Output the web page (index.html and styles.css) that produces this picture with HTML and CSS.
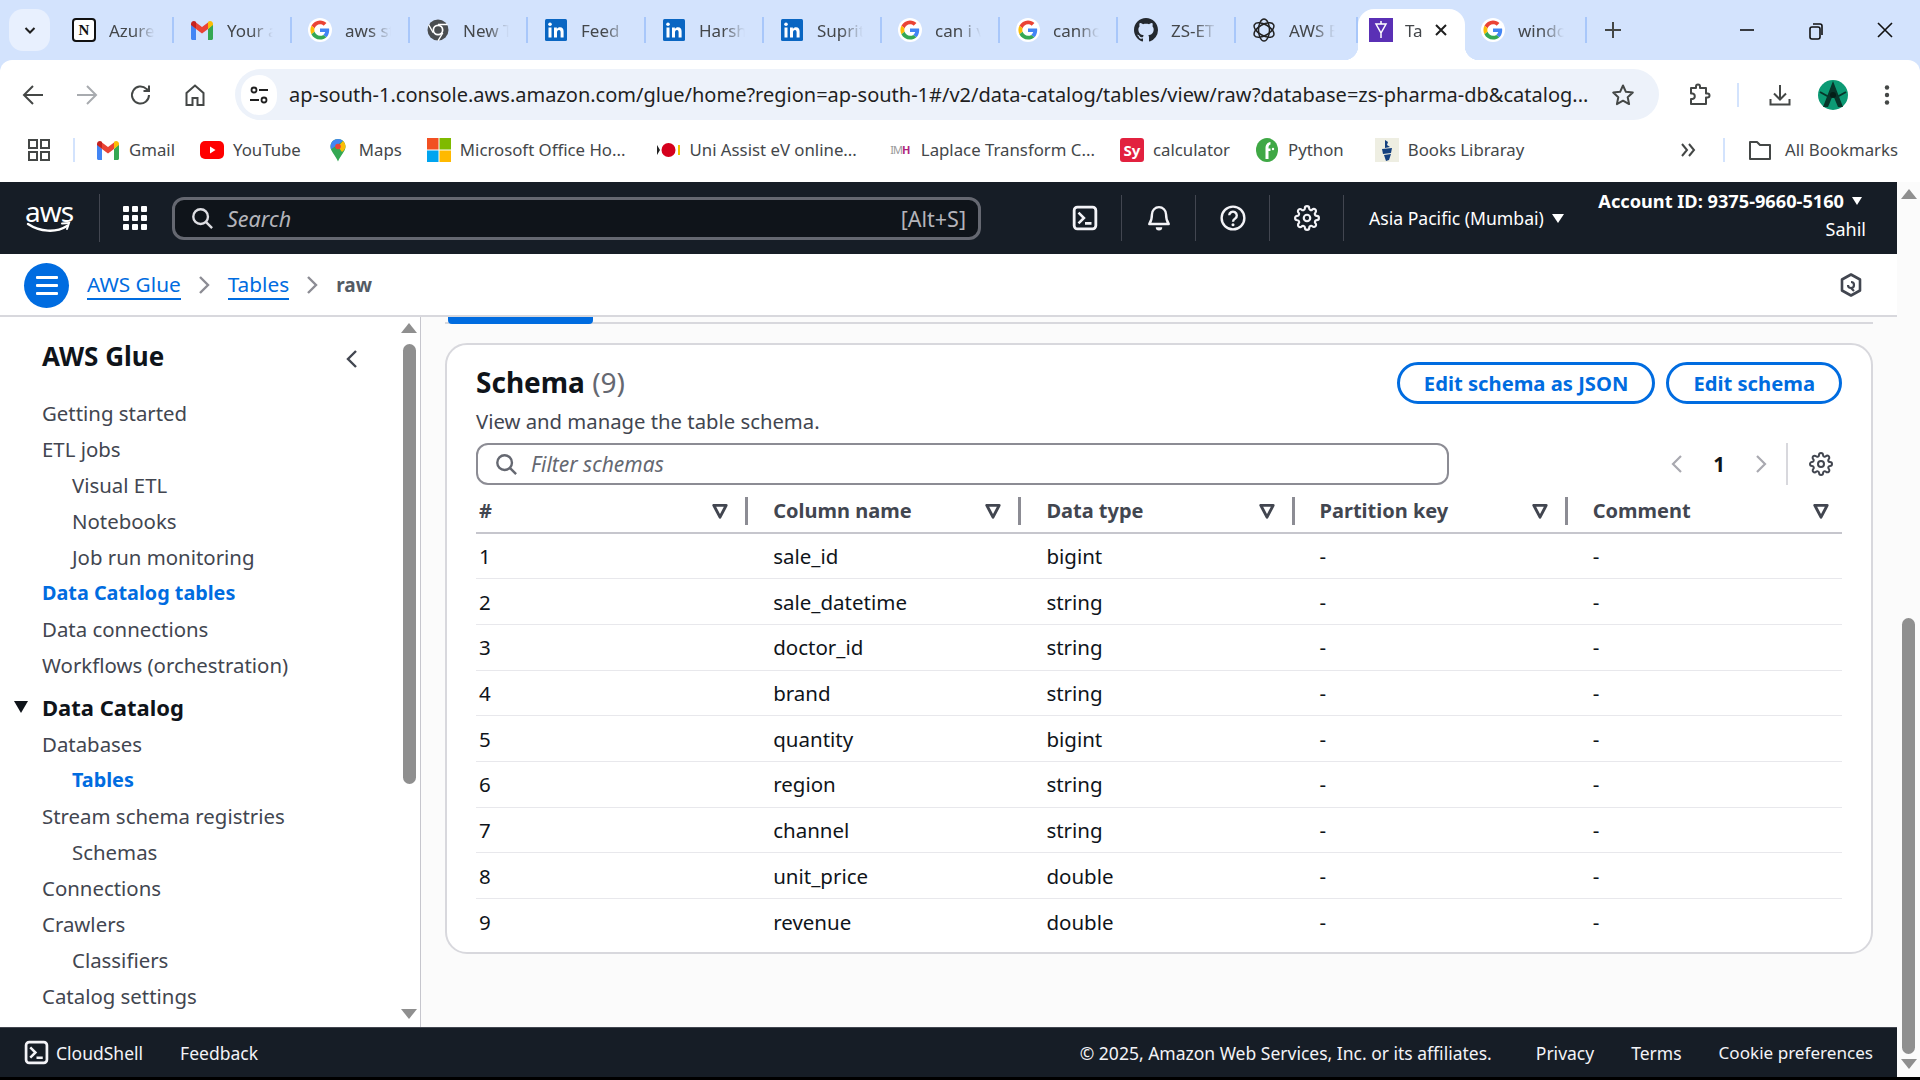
FILE: index.html
```html
<!DOCTYPE html>
<html lang="en">
<head>
    <meta charset="UTF-8">
    <title>Tables | AWS Glue</title>
    <link rel="stylesheet" href="styles.css">
</head>
<body>
<svg class="defs" width="0" height="0">
    <symbol id="g" viewBox="-6 -6 60 60">
        <circle cx="24" cy="24" r="30" fill="#fff"/>
        <path fill="#EA4335" d="M24 9.5c3.54 0 6.71 1.22 9.21 3.6l6.85-6.85C35.9 2.38 30.47 0 24 0 14.62 0 6.51 5.38 2.56 13.22l7.98 6.19C12.43 13.72 17.74 9.5 24 9.5z"/>
        <path fill="#4285F4" d="M46.98 24.55c0-1.57-.15-3.09-.38-4.55H24v9.02h12.94c-.58 2.96-2.26 5.48-4.78 7.18l7.73 6c4.51-4.18 7.09-10.36 7.09-17.65z"/>
        <path fill="#FBBC05" d="M10.53 28.59c-.48-1.45-.76-2.99-.76-4.59s.27-3.14.76-4.59l-7.98-6.19C.92 16.46 0 20.12 0 24c0 3.88.92 7.54 2.56 10.78l7.97-6.19z"/>
        <path fill="#34A853" d="M24 48c6.48 0 11.93-2.13 15.89-5.81l-7.73-6c-2.15 1.45-4.92 2.3-8.16 2.3-6.26 0-11.57-4.22-13.47-9.91l-7.98 6.19C6.51 42.62 14.62 48 24 48z"/>
    </symbol>
    <symbol id="gmail" viewBox="0 0 24 24">
        <path fill="#4285F4" d="M1 6v14.5c0 .8.7 1.5 1.5 1.5H6V11z"/>
        <path fill="#34A853" d="M18 11v11h3.5c.8 0 1.5-.7 1.5-1.5V6z"/>
        <path fill="#EA4335" d="M6 11V4.5l6 4.6 6-4.6V11l-6 4.6z"/>
        <path fill="#C5221F" d="M1 6c0-2.5 2.8-3.8 4.8-2.3L6 3.9V11L1 7z"/>
        <path fill="#FBBC05" d="M18 3.9l.2-.2C20.200 2.200 23 3.500 23 6v1l-5 4z"/>
    </symbol>
    <symbol id="linkedin" viewBox="0 0 24 24">
        <rect x="1" y="1" width="22" height="22" rx="1.500" fill="#0a66c2"/>
        <rect x="4.500" y="9.500" width="3" height="10" fill="#fff"/>
        <circle cx="6" cy="6.300" r="1.800" fill="#fff"/>
        <path fill="#fff" d="M10 9.500h2.900v1.400c.6-1 1.700-1.700 3.100-1.700 2.700 0 3.600 1.700 3.600 4.400v5.900h-3v-5.200c0-1.300-.3-2.400-1.600-2.400-1.400 0-2 1-2 2.400v5.200h-3z"/>
    </symbol>
    <symbol id="gear" viewBox="0 0 24 24">
        <g fill="none" stroke="currentColor" stroke-width="2">
            <circle cx="12" cy="12" r="3"/>
            <path d="M19.400 15a1.650 1.650 0 0 0 .33 1.820l.06.06a2 2 0 0 1 0 2.830 2 2 0 0 1-2.830 0l-.06-.06a1.650 1.650 0 0 0-1.820-.33 1.650 1.650 0 0 0-1 1.510V21a2 2 0 0 1-2 2 2 2 0 0 1-2-2v-.09A1.650 1.650 0 0 0 9 19.400a1.650 1.650 0 0 0-1.820.33l-.06.06a2 2 0 0 1-2.830 0 2 2 0 0 1 0-2.830l.06-.06a1.650 1.650 0 0 0 .33-1.820 1.650 1.650 0 0 0-1.510-1H3a2 2 0 0 1-2-2 2 2 0 0 1 2-2h.09A1.650 1.650 0 0 0 4.600 9a1.650 1.650 0 0 0-.33-1.820l-.06-.06a2 2 0 0 1 0-2.830 2 2 0 0 1 2.830 0l.06.06a1.650 1.650 0 0 0 1.820.33H9a1.650 1.650 0 0 0 1-1.510V3a2 2 0 0 1 2-2 2 2 0 0 1 2 2v.09a1.650 1.650 0 0 0 1 1.510 1.650 1.650 0 0 0 1.820-.33l.06-.06a2 2 0 0 1 2.830 0 2 2 0 0 1 0 2.830l-.06.06a1.650 1.650 0 0 0-.33 1.820V9a1.650 1.650 0 0 0 1.510 1H21a2 2 0 0 1 2 2 2 2 0 0 1-2 2h-.09a1.650 1.650 0 0 0-1.510 1z"/>
        </g>
    </symbol>
    <symbol id="search" viewBox="0 0 24 24">
        <g fill="none" stroke="currentColor" stroke-width="2.600">
            <circle cx="10.500" cy="10.500" r="8"/>
            <path d="M16.500 16.500L23 23"/>
        </g>
    </symbol>
    <symbol id="shell" viewBox="0 0 24 24">
        <rect x="2" y="2" width="20" height="20" rx="3" fill="none" stroke="currentColor" stroke-width="2.600"/>
        <path d="M6 7l5 5-5 5M12 17h6" fill="none" stroke="currentColor" stroke-width="2.400"/>
    </symbol>
    <symbol id="caret-filter" viewBox="0 0 16 16">
        <path d="M2.500 3h11L8 13.500z" fill="none" stroke="currentColor" stroke-width="2.600" stroke-linejoin="round"/>
    </symbol>
</svg>

<header class="browser">
    <div class="tabstrip">
        <div class="tabsearch">
            <svg width="16" height="16" viewBox="0 0 16 16"><path d="M3.500 6L8 10.500 12.500 6" fill="none" stroke="#1f1f1f" stroke-width="2"/></svg>
        </div>
        <div class="tab">
            <span class="fav notion">N</span><span class="tabtitle">Azure</span>
        </div>
        <div class="tab">
            <svg class="fav"><use href="#gmail"/></svg><span class="tabtitle">Your a</span>
        </div>
        <div class="tab">
            <svg class="fav"><use href="#g"/></svg><span class="tabtitle">aws st</span>
        </div>
        <div class="tab">
            <svg class="fav" viewBox="0 0 24 24"><circle cx="12" cy="12" r="10.500" fill="#4a4d50"/><circle cx="12" cy="12" r="5.500" fill="#fff"/><circle cx="12" cy="12" r="3.800" fill="#4a4d50"/><path d="M12 6.500h9.500M7.200 14.800L2.600 6.600M16.800 14.800l-4.800 8" stroke="#fff" stroke-width="1.300"/></svg><span class="tabtitle">New T</span>
        </div>
        <div class="tab">
            <svg class="fav"><use href="#linkedin"/></svg><span class="tabtitle">Feed |</span>
        </div>
        <div class="tab">
            <svg class="fav"><use href="#linkedin"/></svg><span class="tabtitle">Harshv</span>
        </div>
        <div class="tab">
            <svg class="fav"><use href="#linkedin"/></svg><span class="tabtitle">Supritl</span>
        </div>
        <div class="tab">
            <svg class="fav"><use href="#g"/></svg><span class="tabtitle">can i v</span>
        </div>
        <div class="tab">
            <svg class="fav"><use href="#g"/></svg><span class="tabtitle">canno</span>
        </div>
        <div class="tab">
            <svg class="fav" viewBox="0 0 16 16"><path fill="#24292f" d="M8 0C3.580 0 0 3.580 0 8c0 3.540 2.290 6.530 5.470 7.590.4.07.55-.17.55-.38 0-.19-.01-.82-.01-1.490-2.010.37-2.530-.49-2.690-.94-.09-.23-.48-.94-.82-1.130-.28-.15-.68-.52-.01-.53.63-.01 1.080.58 1.230.82.72 1.210 1.870.87 2.330.66.07-.52.28-.87.51-1.070-1.780-.2-3.640-.89-3.640-3.950 0-.87.31-1.590.82-2.150-.08-.2-.36-1.020.08-2.120 0 0 .67-.21 2.200.82.64-.18 1.320-.27 2-.27.68 0 1.360.09 2 .27 1.530-1.040 2.200-.82 2.200-.82.44 1.100.16 1.920.08 2.120.51.56.82 1.270.82 2.150 0 3.070-1.870 3.750-3.650 3.950.29.25.54.73.54 1.480 0 1.070-.01 1.930-.01 2.200 0 .21.15.46.55.38A8.013 8.013 0 0016 8c0-4.420-3.580-8-8-8z"/></svg><span class="tabtitle">ZS-ET</span>
        </div>
        <div class="tab tab-wide">
            <svg class="fav" viewBox="0 0 24 24"><g fill="none" stroke="#222" stroke-width="1.500"><ellipse cx="12" cy="12" rx="11" ry="5.500" transform="rotate(30 12 12)"/><ellipse cx="12" cy="12" rx="11" ry="5.500" transform="rotate(90 12 12)"/><ellipse cx="12" cy="12" rx="11" ry="5.500" transform="rotate(150 12 12)"/></g></svg><span class="tabtitle">AWS E</span>
        </div>
        <div class="tab-active">
            <svg class="fav" viewBox="0 0 24 24"><rect width="24" height="24" fill="#5a30b5"/><path d="M7 6h10l-5 9zM12 15v5M12 3v3" fill="none" stroke="#fff" stroke-width="1.500"/></svg>
            <span class="tabtitle tabtitle-short">Ta</span>
            <svg class="tabclose" width="14" height="14" viewBox="0 0 14 14"><path d="M2 2l10 10M12 2L2 12" stroke="#1f1f1f" stroke-width="2"/></svg>
        </div>
        <div class="tab tab-wide">
            <svg class="fav"><use href="#g"/></svg><span class="tabtitle">windo</span>
        </div>
        <svg class="newtab" width="18" height="18" viewBox="0 0 18 18"><path d="M9 1v16M1 9h16" stroke="#444746" stroke-width="2"/></svg>
        <div class="winctl">
            <svg width="16" height="16" viewBox="0 0 16 16"><path d="M1 8h14" stroke="#111" stroke-width="1.600"/></svg>
            <svg width="16" height="18" viewBox="0 0 16 18"><rect x="2" y="5" width="10" height="12" rx="2" fill="none" stroke="#111" stroke-width="1.600"/><path d="M5 2h7a2 2 0 0 1 2 2v9" fill="none" stroke="#111" stroke-width="1.600"/></svg>
            <svg width="16" height="16" viewBox="0 0 16 16"><path d="M1 1l14 14M15 1L1 15" stroke="#111" stroke-width="1.600"/></svg>
        </div>
    </div>

    <div class="toolbar">
        <svg class="tool tool-first" viewBox="0 0 24 24"><path d="M22 12H4M12 3l-9 9 9 9" fill="none" stroke="#444746" stroke-width="2"/></svg>
        <svg class="tool" viewBox="0 0 24 24"><path d="M2 12h18M12 3l9 9-9 9" fill="none" stroke="#a8abaf" stroke-width="2"/></svg>
        <svg class="tool" viewBox="0 0 24 24"><path d="M20 12a8.500 8.500 0 1 1-2.600-6.100L20 8M20 2.500V8h-5.500" fill="none" stroke="#444746" stroke-width="2"/></svg>
        <svg class="tool tool-home" viewBox="0 0 24 24"><path d="M3.500 22V10L12 2.500 20.500 10v12h-6v-7h-5v7z" fill="none" stroke="#444746" stroke-width="2"/></svg>
        <div class="omnibox">
            <span class="tune">
                <svg width="22" height="22" viewBox="0 0 22 22"><g fill="none" stroke="#1f1f1f" stroke-width="1.800"><circle cx="6" cy="6" r="2.500"/><path d="M11 6h9M2 16h9"/><circle cx="16" cy="16" r="2.500"/></g></svg>
            </span>
            <span class="url">ap-south-1.console.aws.amazon.com/glue/home?region=ap-south-1#/v2/data-catalog/tables/view/raw?database=zs-pharma-db&amp;catalog...</span>
            <svg class="star" width="24" height="24" viewBox="0 0 24 24"><path d="M12 2.500l2.900 6.300 6.900.8-5.100 4.700 1.400 6.800-6.100-3.400-6.100 3.400 1.400-6.800L2.200 9.600l6.900-.8z" fill="none" stroke="#444746" stroke-width="2" stroke-linejoin="round"/></svg>
        </div>
        <svg class="tool tool-ext" viewBox="0 0 24 24"><path d="M4 5h5V3.500a2 2 0 0 1 4 0V5h6v5.500h1.500a2 2 0 0 1 0 4H19V21H4v-5h1.500a2.800 2.800 0 0 0 0-5.500H4z" fill="none" stroke="#444746" stroke-width="2" stroke-linejoin="round"/></svg>
        <span class="tool-sep"></span>
        <svg class="tool tool-dl" viewBox="0 0 24 24"><path d="M12 2v14M6 10.500l6 6 6-6M2.500 16v5.500h19V16" fill="none" stroke="#444746" stroke-width="2"/></svg>
        <svg class="avatar" viewBox="0 0 30 30"><circle cx="15" cy="15" r="15" fill="#0c9a74"/><path d="M15 1L5 27h5l5-12 5 12h5z" fill="#07352a"/><path d="M2 12l9 5M28 12l-9 5" stroke="#07352a" stroke-width="2"/><circle cx="15" cy="15" r="3" fill="#041f18"/></svg>
        <svg class="tool tool-dots" viewBox="0 0 24 24"><circle cx="12" cy="4.500" r="2.200" fill="#444746"/><circle cx="12" cy="12" r="2.200" fill="#444746"/><circle cx="12" cy="19.500" r="2.200" fill="#444746"/></svg>
    </div>

    <div class="bookmarks">
        <svg class="bm-apps" viewBox="0 0 22 22"><g fill="none" stroke="#444746" stroke-width="2"><rect x="1" y="1" width="8" height="8"/><rect x="13" y="1" width="8" height="8"/><rect x="1" y="13" width="8" height="8"/><rect x="13" y="13" width="8" height="8"/></g></svg>
        <span class="bm-sep"></span>
        <div class="bm"><svg class="fav"><use href="#gmail"/></svg>Gmail</div>
        <div class="bm"><svg class="fav" viewBox="0 0 24 24"><rect y="3" width="24" height="18" rx="5" fill="#f00"/><path d="M10 8.500l5.500 3.500-5.500 3.500z" fill="#fff"/></svg>YouTube</div>
        <div class="bm"><svg class="fav" viewBox="0 0 24 24"><path d="M12 1c-4 0-7.500 3-7.500 7.500 0 5 4.500 8 7.500 15 3-7 7.500-10 7.500-15C19.500 4 16 1 12 1z" fill="#34a853"/><path d="M12 1C8 1 4.500 4 4.500 8.500c0 1 .2 2 .5 2.800L17 3c-1.300-1.200-3-2-5-2z" fill="#4285f4"/><path d="M19.500 8.500c0-2.200-1-4.200-2.500-5.500l-5 5.500L16 14c2-1.800 3.500-3.200 3.500-5.500z" fill="#fbbc05"/><circle cx="12" cy="8.500" r="2.800" fill="#ea4335"/></svg>Maps</div>
        <div class="bm bm-wide"><svg class="fav" viewBox="0 0 24 24"><rect width="11.500" height="11.500" fill="#f25022"/><rect x="12.500" width="11.500" height="11.500" fill="#7fba00"/><rect y="12.500" width="11.500" height="11.500" fill="#00a4ef"/><rect x="12.500" y="12.500" width="11.500" height="11.500" fill="#ffb900"/></svg>Microsoft Office Ho...</div>
        <div class="bm bm-wide"><svg class="fav" viewBox="0 0 24 24"><path d="M0 7l3 5-3 5z" fill="#222"/><circle cx="11.500" cy="12" r="7" fill="#d5001c"/><rect x="21" y="7" width="2" height="10" fill="#f2c200"/></svg>Uni Assist eV online...</div>
        <div class="bm"><span class="fav laplace">IM<b>H</b></span>Laplace Transform C...</div>
        <div class="bm"><span class="fav sy">Sy</span>calculator</div>
        <div class="bm bm-wide"><svg class="fav" viewBox="0 0 24 24"><ellipse cx="12" cy="12" rx="11" ry="12" fill="#3fa845"/><path d="M10.500 21V10.500c0-3.500 1.500-6 5-6.500v2.500c-1.500.3-2 1.500-2 4h2v2.500h-2V21z" fill="#fff"/><circle cx="18" cy="11" r="1.200" fill="#fff"/></svg>Python</div>
        <div class="bm"><svg class="fav" viewBox="0 0 24 24"><rect width="24" height="24" fill="#eeeee2"/><path d="M10 2l3 2-1 3 3 2-5 1zM7 11l10-1-1 5-8 1zM9 17l7-1-2 6-3 1z" fill="#14407f"/></svg>Books Libraray</div>
        <svg class="bm-more" width="18" height="18" viewBox="0 0 18 18"><path d="M3 3l5 6-5 6M10 3l5 6-5 6" fill="none" stroke="#444746" stroke-width="2"/></svg>
        <span class="bm-sep bm-sep-right"></span>
        <div class="bm bm-all"><svg class="fav" viewBox="0 0 24 24"><path d="M2 4h7l3 3h10v14H2z" fill="none" stroke="#444746" stroke-width="2" stroke-linejoin="round"/></svg>All Bookmarks</div>
    </div>
</header>

<div class="viewport">
    <div class="page">
        <div class="topnav">
            <div class="aws-logo">
                <span class="aws-word">aws</span>
                <svg width="48" height="12" viewBox="0 0 48 12"><path d="M3 2c12 8 28 9 39 2" fill="none" stroke="#fff" stroke-width="2.400" stroke-linecap="round"/><path d="M37 1.500l7-.5-2 6" fill="none" stroke="#fff" stroke-width="2" stroke-linecap="round"/></svg>
            </div>
            <span class="nav-sep nav-sep-logo"></span>
            <svg class="grid-icon" viewBox="0 0 24 24" fill="#fff"><rect width="6" height="6" rx="1"/><rect x="9" width="6" height="6" rx="1"/><rect x="18" width="6" height="6" rx="1"/><rect y="9" width="6" height="6" rx="1"/><rect x="9" y="9" width="6" height="6" rx="1"/><rect x="18" y="9" width="6" height="6" rx="1"/><rect y="18" width="6" height="6" rx="1"/><rect x="9" y="18" width="6" height="6" rx="1"/><rect x="18" y="18" width="6" height="6" rx="1"/></svg>
            <div class="topsearch">
                <svg class="topsearch-icon"><use href="#search"/></svg>
                <span class="topsearch-text">Search</span>
                <span class="topsearch-key">[Alt+S]</span>
            </div>
            <div class="navicon"><svg><use href="#shell"/></svg></div>
            <div class="navicon"><svg viewBox="0 0 24 24"><path d="M12 2a6.500 6.500 0 0 0-6.500 6.500c0 5-1 7-2.500 9h18c-1.500-2-2.500-4-2.500-9A6.500 6.500 0 0 0 12 2z" fill="none" stroke="currentColor" stroke-width="2.200" stroke-linejoin="round"/><path d="M9 20.500a3 3 0 0 0 6 0z" fill="currentColor"/></svg></div>
            <div class="navicon"><svg viewBox="0 0 24 24"><circle cx="12" cy="12" r="10.500" fill="none" stroke="currentColor" stroke-width="2.200"/><path d="M8.500 9.500a3.500 3.500 0 1 1 5.500 3c-1.400.9-2 1.500-2 3" fill="none" stroke="currentColor" stroke-width="2.200"/><circle cx="12" cy="18.300" r="1.400" fill="currentColor"/></svg></div>
            <div class="navicon"><svg><use href="#gear"/></svg></div>
            <div class="region">Asia Pacific (Mumbai) <i class="tri"></i></div>
            <div class="account">
                <div class="account-id">Account ID: 9375-9660-5160 <i class="tri tri-small"></i></div>
                <div class="account-user">Sahil</div>
            </div>
        </div>

        <div class="crumbs">
            <span class="menu-btn"><i></i><i></i><i></i></span>
            <a class="crumb">AWS Glue</a>
            <svg class="crumb-sep" viewBox="0 0 12 20"><path d="M2 2l8 8-8 8" fill="none" stroke="#8c8c94" stroke-width="2.400"/></svg>
            <a class="crumb">Tables</a>
            <svg class="crumb-sep" viewBox="0 0 12 20"><path d="M2 2l8 8-8 8" fill="none" stroke="#8c8c94" stroke-width="2.400"/></svg>
            <span class="crumb-current">raw</span>
            <svg class="crumb-hex" viewBox="0 0 24 24"><path d="M12 1.500l9 5v11l-9 5-9-5v-11z" fill="none" stroke="#424650" stroke-width="2.600" stroke-linejoin="round"/><path d="M12 9a3 3 0 1 1-3 3M12 15l3 3" fill="none" stroke="#424650" stroke-width="2.200"/></svg>
        </div>

        <div class="body-row">
            <aside class="sidebar">
                <div class="side-inner">
                    <div class="side-head">
                        <span class="side-title">AWS Glue</span>
                        <svg class="side-collapse" viewBox="0 0 12 20"><path d="M10 2l-8 8 8 8" fill="none" stroke="#424650" stroke-width="2.400"/></svg>
                    </div>
                    <ul class="sidenav">
                        <li>Getting started</li>
                        <li>ETL jobs</li>
                        <li class="sub">Visual ETL</li>
                        <li class="sub">Notebooks</li>
                        <li class="sub">Job run monitoring</li>
                        <li class="active">Data Catalog tables</li>
                        <li>Data connections</li>
                        <li>Workflows (orchestration)</li>
                        <li class="section"><i class="section-tri"></i>Data Catalog</li>
                        <li>Databases</li>
                        <li class="sub active">Tables</li>
                        <li>Stream schema registries</li>
                        <li class="sub">Schemas</li>
                        <li>Connections</li>
                        <li>Crawlers</li>
                        <li class="sub">Classifiers</li>
                        <li>Catalog settings</li>
                    </ul>
                </div>
                <div class="sb sb-side">
                    <i class="sb-up"></i>
                    <span class="sb-thumb sb-thumb-side"></span>
                    <span class="sb-fill"></span>
                    <i class="sb-down"></i>
                </div>
            </aside>

            <main class="content">
                <div class="tabline"><span class="tabline-active"></span></div>
                <section class="card">
                    <div class="card-head">
                        <div>
                            <h2 class="card-title">Schema <span class="count">(9)</span></h2>
                            <p class="card-desc">View and manage the table schema.</p>
                        </div>
                        <div class="card-actions">
                            <button class="btn">Edit schema as JSON</button>
                            <button class="btn">Edit schema</button>
                        </div>
                    </div>
                    <div class="filter-row">
                        <div class="filter">
                            <svg class="filter-icon"><use href="#search"/></svg>
                            <span>Filter schemas</span>
                        </div>
                        <div class="pager">
                            <svg class="pager-arrow" viewBox="0 0 12 20"><path d="M10 2l-8 8 8 8" fill="none" stroke="#a9a9b0" stroke-width="2.200"/></svg>
                            <b>1</b>
                            <svg class="pager-arrow" viewBox="0 0 12 20"><path d="M2 2l8 8-8 8" fill="none" stroke="#a9a9b0" stroke-width="2.200"/></svg>
                            <span class="pager-sep"></span>
                            <svg class="pager-gear"><use href="#gear"/></svg>
                        </div>
                    </div>
                    <table class="schema">
                        <thead>
                            <tr>
                                <th><div class="th">#<svg><use href="#caret-filter"/></svg><i></i></div></th>
                                <th><div class="th">Column name<svg><use href="#caret-filter"/></svg><i></i></div></th>
                                <th><div class="th">Data type<svg><use href="#caret-filter"/></svg><i></i></div></th>
                                <th><div class="th">Partition key<svg><use href="#caret-filter"/></svg><i></i></div></th>
                                <th><div class="th th-last">Comment<svg><use href="#caret-filter"/></svg></div></th>
                            </tr>
                        </thead>
                        <tbody>
                            <tr><td>1</td><td>sale_id</td><td>bigint</td><td>-</td><td>-</td></tr>
                            <tr><td>2</td><td>sale_datetime</td><td>string</td><td>-</td><td>-</td></tr>
                            <tr><td>3</td><td>doctor_id</td><td>string</td><td>-</td><td>-</td></tr>
                            <tr><td>4</td><td>brand</td><td>string</td><td>-</td><td>-</td></tr>
                            <tr><td>5</td><td>quantity</td><td>bigint</td><td>-</td><td>-</td></tr>
                            <tr><td>6</td><td>region</td><td>string</td><td>-</td><td>-</td></tr>
                            <tr><td>7</td><td>channel</td><td>string</td><td>-</td><td>-</td></tr>
                            <tr><td>8</td><td>unit_price</td><td>double</td><td>-</td><td>-</td></tr>
                            <tr><td>9</td><td>revenue</td><td>double</td><td>-</td><td>-</td></tr>
                        </tbody>
                    </table>
                </section>
            </main>
        </div>

        <footer class="footer">
            <svg class="footer-shell"><use href="#shell"/></svg>
            <span>CloudShell</span>
            <span class="footer-feedback">Feedback</span>
            <span class="footer-copy">© 2025, Amazon Web Services, Inc. or its affiliates.</span>
            <span class="footer-link">Privacy</span>
            <span class="footer-link">Terms</span>
            <span class="footer-link footer-cookie">Cookie preferences</span>
        </footer>
    </div>
    <div class="sb sb-page">
        <i class="sb-up"></i>
        <span class="sb-fill"></span>
        <span class="sb-thumb sb-thumb-page"></span>
        <i class="sb-down"></i>
    </div>
</div>
<div class="os-strip"></div>
</body>
</html>
```

FILE: styles.css
```css
* { box-sizing: border-box; }

html, body {
    margin: 0;
    width: 1920px;
    height: 1080px;
    overflow: hidden;
}
body {
    display: flex;
    flex-direction: column;
    font-family: "Noto Sans", "Open Sans", sans-serif;
    font-size: 20.500px;
    color: #0f141a;
    background: #fff;
}
.defs { position: absolute; }

/* browser */
.browser { flex: none; height: 182px; background: #d3e3fd; }
.tabstrip { display: flex; height: 60px; align-items: stretch; padding: 9px 0 0 9px; }
.tabsearch {
    width: 41px;
    height: 42px;
    background: #e8f0fe;
    border-radius: 14px;
    display: flex;
    align-items: center;
    justify-content: center;
    margin-right: 6px;
}
.fav { width: 24px; height: 24px; flex: none; }
.tab {
    width: 118px;
    height: 42px;
    display: flex;
    align-items: center;
    padding-left: 16px;
    gap: 13px;
    font-size: 17px;
    color: #44474a;
    position: relative;
}
.tab::after {
    content: "";
    position: absolute;
    right: 0;
    top: 8px;
    width: 2px;
    height: 26px;
    background: #a8c7fa;
}
.tab-wide { width: 122px; }
.tabtitle {
    flex: none;
    white-space: nowrap;
    -webkit-mask-image: linear-gradient(90deg, #000 24px, transparent 46px);
    mask-image: linear-gradient(90deg, #000 24px, transparent 46px);
}
.tabtitle-short { width: 20px; }
.notion {
    background: #fff;
    border: 2px solid #111;
    border-radius: 4px;
    font: bold 15px/20px "Liberation Serif", serif;
    color: #111;
    text-align: center;
}
.tab-active {
    width: 107px;
    height: 51px;
    background: #fff;
    border-radius: 16px 16px 0 0;
    display: flex;
    align-items: center;
    padding: 0 0 9px 11px;
    gap: 12px;
    font-size: 17px;
    color: #44474a;
    position: relative;
}
.tab-active::before, .tab-active::after {
    content: "";
    position: absolute;
    bottom: 0;
    width: 14px;
    height: 14px;
}
.tab-active::before { left: -14px; background: radial-gradient(circle at 0 0, transparent 14px, #fff 14.500px); }
.tab-active::after { right: -14px; background: radial-gradient(circle at 100% 0, transparent 14px, #fff 14.500px); }
.tabclose { margin-left: -3px; }
.newtab { align-self: flex-start; margin: 12px 0 0 17px; }
.winctl {
    margin-left: auto;
    display: flex;
    align-items: flex-start;
    gap: 53px;
    padding: 13px 27px 0 0;
}

.toolbar {
    height: 60px;
    background: #fff;
    border-radius: 12px 12px 0 0;
    display: flex;
    align-items: center;
    padding-left: 21px;
}
.tool { width: 24px; height: 24px; flex: none; margin: 9px 30px 0 0; }
.toolbar > .tool-home { margin-right: 28px; }
.omnibox {
    width: 1424px;
    height: 51px;
    margin-top: 9px;
    background: #edf2fa;
    border-radius: 26px;
    display: flex;
    align-items: center;
    padding-left: 6px;
    flex: none;
}
.tune {
    width: 36px;
    height: 40px;
    background: #fff;
    border-radius: 20px;
    display: flex;
    align-items: center;
    justify-content: center;
    flex: none;
}
.url {
    margin-left: 12px;
    width: 1317px;
    white-space: nowrap;
    font-size: 20px;
    color: #1f1f1f;
}
.star { margin-left: 5px; flex: none; }
.toolbar > .tool-ext { margin: 9px 0 0 28px; }
.tool-sep { width: 2px; height: 24px; background: #d3e3fd; margin: 9px 0 0 26px; flex: none; }
.toolbar > .tool-dl { margin: 9px 0 0 29px; }
.avatar { width: 30px; height: 30px; margin: 9px 0 0 26px; flex: none; }
.toolbar > .tool-dots { margin: 9px 0 0 27px; }

.bookmarks {
    height: 62px;
    background: #fff;
    display: flex;
    align-items: center;
    padding: 0 22px 3px 28px;
    font-size: 16.800px;
    color: #44474a;
}
.bm-apps { width: 22px; height: 22px; flex: none; }
.bm-sep { width: 2px; height: 24px; background: #d3e3fd; margin: 0 21px 0 23px; flex: none; }
.bm { display: flex; align-items: center; gap: 9px; margin-right: 25px; white-space: nowrap; }
.bm-wide { margin-right: 31px; }
.bm-more { margin-left: auto; }
.bm-sep-right { margin: 0 23px 0 26px; }
.bm-all { margin-right: 0; gap: 13px; }
.laplace { font-size: 11px; line-height: 24px; color: #999; text-align: center; letter-spacing: -1px; }
.laplace b { color: #b1247d; }
.sy {
    background: #e2213f;
    border-radius: 3px;
    color: #fff;
    font-size: 15px;
    font-weight: 700;
    line-height: 24px;
    text-align: center;
}

/* page */
.viewport { flex: 1; display: flex; min-height: 0; }
.page { flex: 1; min-width: 0; display: flex; flex-direction: column; }
.os-strip { flex: none; height: 3px; background: #000; }

.sb { display: flex; flex-direction: column; align-items: center; background: #fbfbfb; flex: none; }
.sb-fill { flex: 1; }
.sb-up, .sb-down { width: 0; height: 0; border-left: 8px solid transparent; border-right: 8px solid transparent; flex: none; }
.sb-up { border-bottom: 10px solid #8f8f8f; }
.sb-down { border-top: 10px solid #8f8f8f; }
.sb-thumb { width: 13px; background: #8f8f8f; border-radius: 7px; flex: none; }
.sb-page { width: 23px; padding: 7px 0 8px; }
.sb-thumb-page { height: 436px; margin-bottom: 5px; }
.sb-side { width: 22px; background: #fff; padding: 6px 0 8px; height: 100%; margin-left: auto; }
.sb-thumb-side { height: 440px; margin-top: 11px; }

.topnav {
    flex: none;
    height: 72px;
    background: #161d26;
    color: #fff;
    display: flex;
    align-items: center;
    padding-left: 25px;
}
.aws-logo { width: 48px; display: flex; flex-direction: column; align-items: center; }
.aws-word { font-size: 28px; line-height: 24px; letter-spacing: -1px; margin-top: -4px; }
.aws-logo svg { margin-top: -1px; }
.nav-sep-logo { width: 1px; height: 48px; background: #424650; margin: 0 23px 0 26px; }
.grid-icon { width: 24px; height: 24px; flex: none; }
.topsearch {
    width: 809px;
    height: 43px;
    margin-left: 25px;
    margin-right: 67px;
    background: #0f141a;
    border: 3px solid #656871;
    border-radius: 12px;
    display: flex;
    align-items: center;
    padding: 0 12px 0 16px;
    color: #b4b4bb;
    font-size: 21.500px;
    flex: none;
}
.topsearch-icon { width: 22px; height: 22px; color: #dedee3; }
.topsearch-text { font-style: italic; margin-left: 14px; }
.topsearch-key { margin-left: auto; }
.navicon {
    width: 74px;
    height: 46px;
    display: flex;
    align-items: center;
    justify-content: center;
    border-right: 1px solid #424650;
    color: #f3f3f7;
    flex: none;
}
.navicon svg { width: 26px; height: 26px; }
.region { margin-left: 25px; font-size: 17.600px; white-space: nowrap; display: flex; align-items: center; gap: 8px; }
.tri { display: inline-block; width: 0; height: 0; border-left: 6px solid transparent; border-right: 6px solid transparent; border-top: 9px solid #fff; }
.tri-small { border-left-width: 5.500px; border-right-width: 5.500px; border-top-width: 8px; }
.account { margin-left: auto; margin-right: 31px; padding-bottom: 6px; font-size: 18px; text-align: right; }
.account-id { font-size: 18.200px; font-weight: 700; white-space: nowrap; display: flex; align-items: center; gap: 8px; line-height: 28px; margin-right: 4px; }
.account-user { line-height: 28px; }

.crumbs {
    flex: none;
    height: 63px;
    background: #fff;
    border-bottom: 2px solid #d8d8dd;
    display: flex;
    align-items: center;
    padding: 1px 0 0 24px;
    font-size: 20.800px;
}
.menu-btn {
    width: 45px;
    height: 45px;
    border-radius: 50%;
    background: #006ce0;
    display: flex;
    flex-direction: column;
    justify-content: center;
    align-items: center;
    gap: 5px;
    flex: none;
}
.menu-btn i { width: 22px; height: 3px; background: #fff; border-radius: 1px; }
.crumb { color: #006ce0; border-bottom: 2px solid #006ce0; line-height: 27px; }
.menu-btn + .crumb { margin-left: 18px; }
.crumb-sep { width: 12px; height: 20px; margin: 0 18px 0 17px; flex: none; }
.crumb-current { color: #545b64; font-weight: 700; font-size: 19px; }
.crumb-hex { width: 24px; height: 24px; margin-left: auto; margin-right: 34px; }

.body-row { flex: 1; display: flex; min-height: 0; }
.sidebar {
    width: 421px;
    flex: none;
    display: flex;
    background: #fff;
    border-right: 2px solid #c6c6cd;
}
.side-inner { width: 398px; flex: none; padding: 0 0 0 42px; }
.side-head { display: flex; align-items: center; justify-content: space-between; height: 78px; padding: 0 40px 0 0; }
.side-title { font-size: 26px; font-weight: 700; }
.side-collapse { width: 12px; height: 20px; margin-top: 5px; }
.sidenav { list-style: none; margin: 0; padding: 0; color: #424650; font-size: 20.400px; }
.sidenav li { height: 36px; line-height: 36px; white-space: nowrap; }
.sidenav .sub { padding-left: 30px; }
.sidenav .active { color: #006ce0; font-weight: 700; font-size: 19.800px; }
.sidenav .section {
    color: #0f141a;
    font-size: 22px;
    font-weight: 700;
    height: 38px;
    line-height: 38px;
    margin-top: 5px;
    position: relative;
}
.section-tri {
    position: absolute;
    left: -28px;
    top: 13px;
    border-left: 7.500px solid transparent;
    border-right: 7.500px solid transparent;
    border-top: 12px solid #0f141a;
}

.content { flex: 1; min-width: 0; background: #fbfbfb; padding: 0 24px 0 24px; }
.tabline { height: 7px; border-bottom: 2px solid #d8d8dd; }
.tabline-active { display: block; width: 145px; height: 7px; margin-left: 3px; background: #006ce0; border-radius: 0 0 4px 4px; }

.card {
    margin-top: 19px;
    height: 611px;
    background: #fff;
    border: 2px solid #d8d8dd;
    border-radius: 22px;
    padding: 16px 29px 0 29px;
}
.card-head { display: flex; justify-content: space-between; align-items: flex-start; }
.card-title { margin: 0; font-size: 28px; font-weight: 700; line-height: 42px; }
.count { font-weight: 400; color: #656871; }
.card-desc { margin: 3px 0 0; color: #424650; line-height: 30px; font-size: 20.300px; }
.card-actions { display: flex; gap: 11px; margin-top: 1px; }
.btn {
    height: 42px;
    padding: 0 24px;
    background: #fff;
    border: 3px solid #006ce0;
    border-radius: 21px;
    color: #006ce0;
    font: 700 20.200px "Noto Sans", sans-serif;
}
.filter-row { display: flex; align-items: center; margin-top: 7px; }
.filter {
    width: 973px;
    height: 42px;
    border: 2px solid #8c8c94;
    border-radius: 12px;
    display: flex;
    align-items: center;
    padding-left: 17px;
    gap: 14px;
    font-style: italic;
    font-size: 21px;
    color: #656871;
}
.filter-icon { width: 22px; height: 22px; color: #656871; }
.pager { margin-left: auto; display: flex; align-items: center; color: #0f141a; height: 42px; }
.pager-arrow { width: 12px; height: 20px; }
.pager b { width: 72px; text-align: center; }
.pager-sep { width: 2px; height: 42px; background: #d8d8dd; margin: 0 21px 0 19px; }
.pager-gear { width: 24px; height: 24px; color: #424650; margin-right: 9px; }

.schema { width: 1366px; table-layout: fixed; border-collapse: collapse; margin-top: 4px; }
.schema th { padding: 0; font-weight: 700; font-size: 20px; text-align: left; color: #424650; border-bottom: 2px solid #c6c6cd; }
.th { height: 43px; display: flex; align-items: center; padding-left: 24px; }
th:first-child .th { padding-left: 3px; }
.th svg { width: 18px; height: 18px; margin-left: auto; margin-right: 16px; color: #424650; flex: none; }
.th i { width: 3px; height: 28px; background: #8c8c94; margin-right: 1px; flex: none; }
.th-last svg { margin-right: 12px; }
.schema td { height: 45.700px; padding: 0 0 0 24px; border-bottom: 1px solid #e8e8ec; }
.schema td:first-child { padding-left: 3px; }
.schema tr:last-child td { border-bottom: 0; }

.footer {
    flex: none;
    height: 50px;
    background: #161d26;
    border-top: 1px solid #424650;
    color: #f3f3f7;
    font-size: 17.500px;
    display: flex;
    align-items: center;
    padding: 0 24px;
}
.footer-shell { width: 25px; height: 25px; margin-right: 7px; }
.footer-feedback { margin-left: 37px; }
.footer-copy { margin-left: auto; margin-right: 7px; }
.footer-link { margin-left: 37px; }
.footer-cookie { font-size: 17.100px; }
```
